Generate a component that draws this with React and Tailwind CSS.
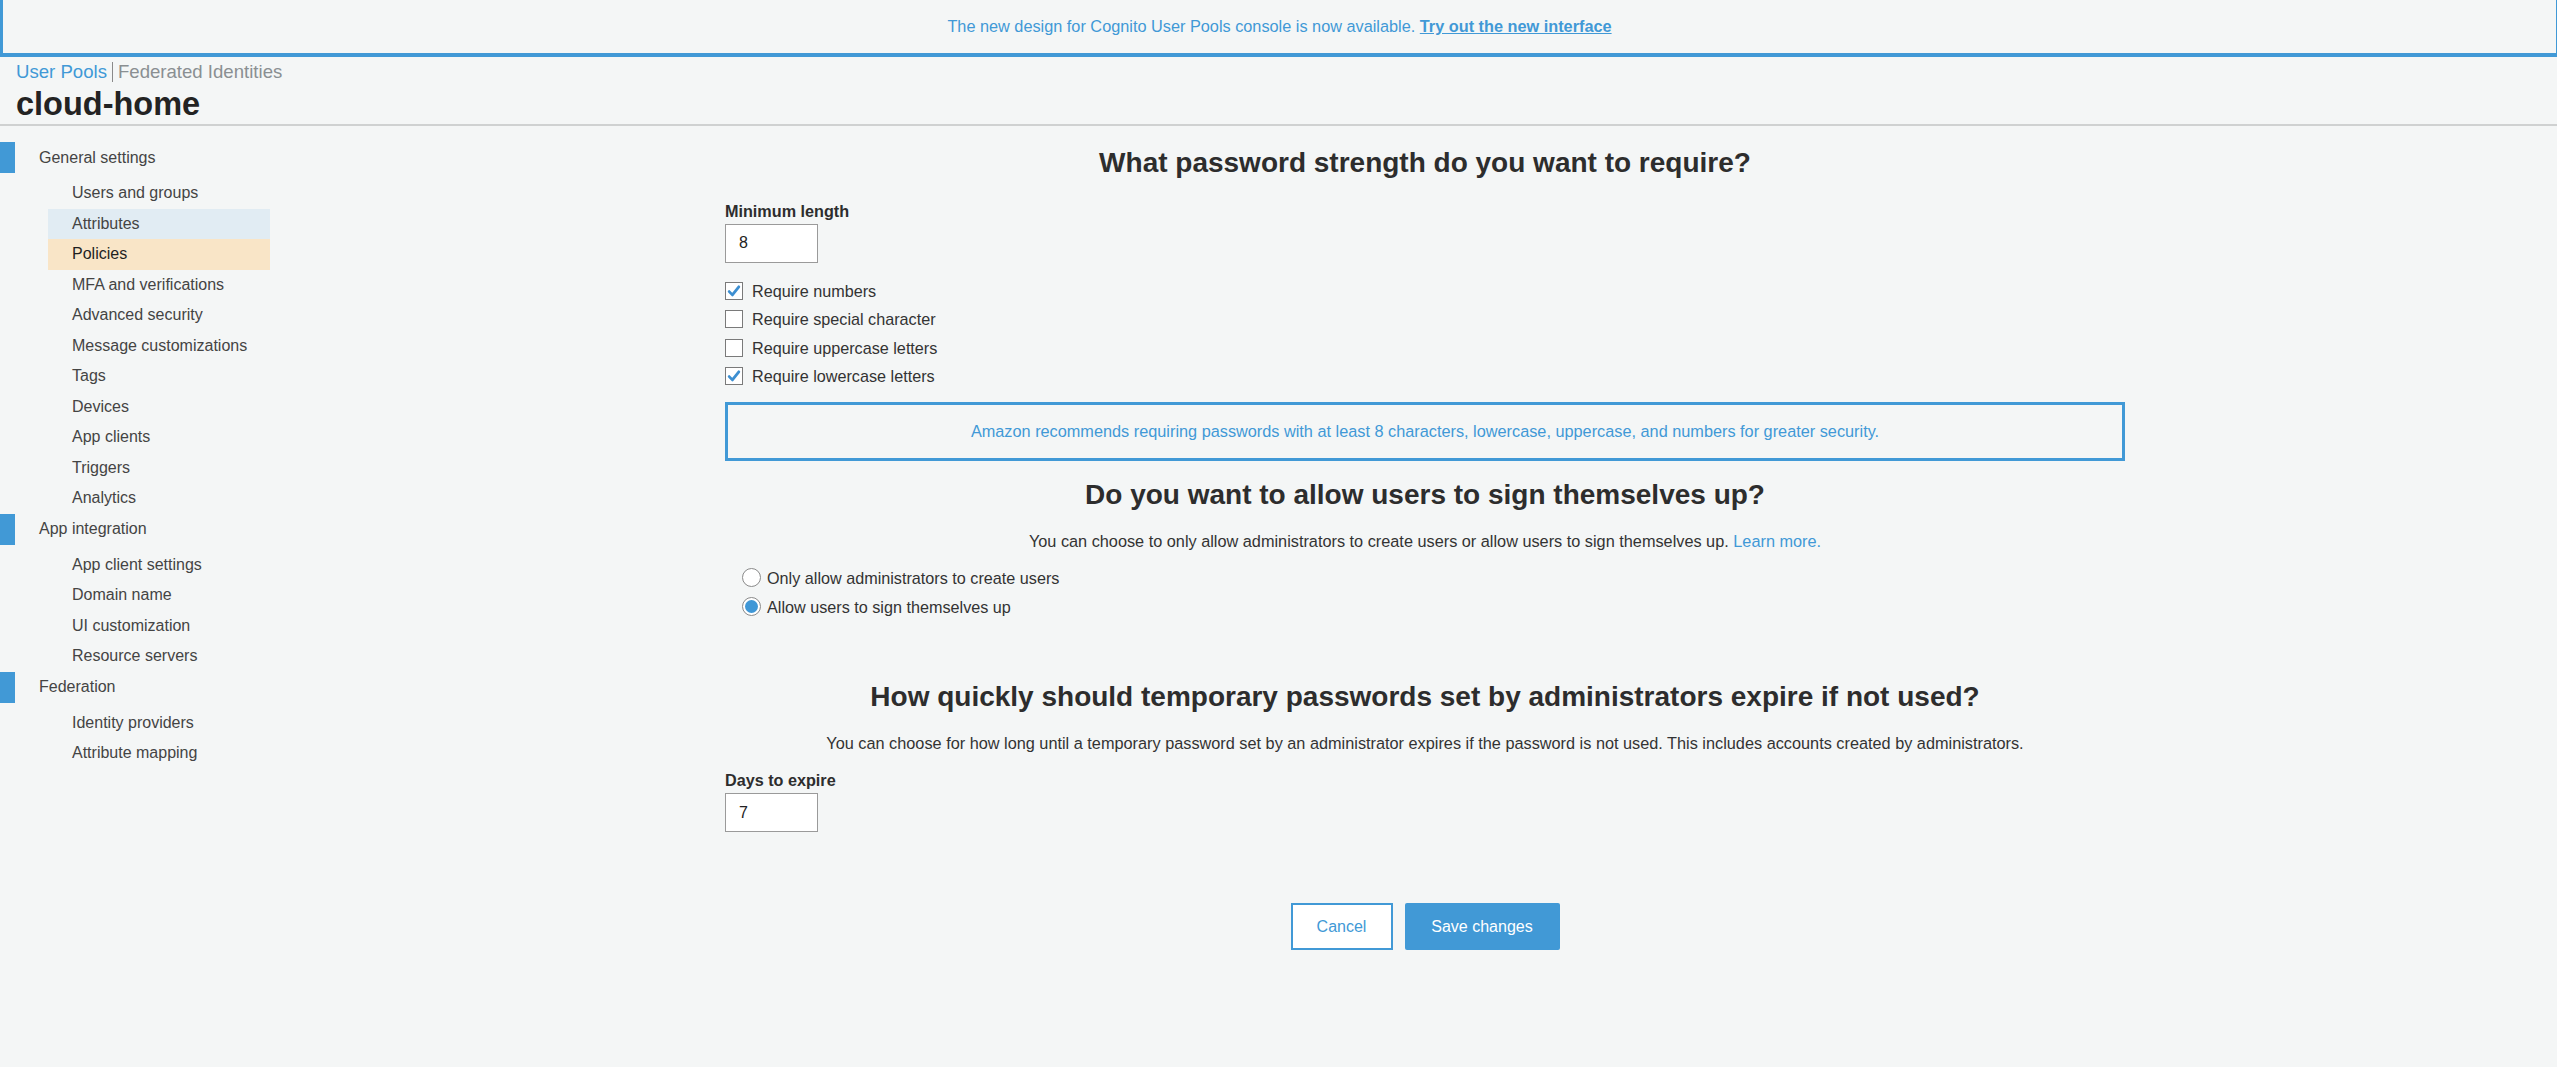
import React from "react";

function Check() {
  return (
    <svg width="14" height="14" viewBox="0 0 14 14" className="block">
      <path d="M2.2 7.6 L5.4 10.9 L11.8 2.8" fill="none" stroke="#3d8fd1" strokeWidth="2.8" strokeLinecap="round" strokeLinejoin="round" />
    </svg>
  );
}

function CheckRow({ label, checked }) {
  return (
    <div className="flex h-[28.5px] items-center">
      <span className="flex h-[18px] w-[18px] items-center justify-center border border-[#7a7a7a] bg-white">
        {checked && <Check />}
      </span>
      <span className="ml-[9px] text-[16.2px] leading-[20px] text-[#333]">{label}</span>
    </div>
  );
}

function RadioRow({ label, checked }) {
  return (
    <div className="flex h-[29px] items-center pl-[17px]">
      <span className="flex h-[19px] w-[19px] items-center justify-center rounded-full border border-[#8a8a8a] bg-white">
        {checked && <span className="h-[13px] w-[13px] rounded-full bg-[#3f97d6]" />}
      </span>
      <span className="ml-[6px] text-[16.2px] leading-[20px] text-[#333]">{label}</span>
    </div>
  );
}

function NavHeader({ label }) {
  return (
    <div className="flex h-[31px] items-center">
      <span className="h-[31px] w-[15px] bg-[#4199d6]" />
      <span className="ml-[24px] text-[16px] text-[#444]">{label}</span>
    </div>
  );
}

function NavItem({ label, state }) {
  const bg = state === "hover" ? "bg-[#e1ecf3]" : state === "active" ? "bg-[#f9e5c7]" : "";
  const color = state === "active" ? "text-[#1f1f1f]" : "text-[#444]";
  return (
    <div className={`ml-[48px] flex h-[30.5px] w-[222px] items-center pl-[24px] text-[16px] ${bg} ${color}`}>
      {label}
    </div>
  );
}

export default function App() {
  return (
    <div className="min-h-screen bg-[#f4f6f6] font-['Liberation_Sans',Arial,sans-serif] text-[#333]">
      {/* banner */}
      <div className="flex h-[57px] items-center justify-center border-b-4 border-l-[3px] border-r border-[#4199d6] text-[16.3px] text-[#4199d6]">
        <span>
          The new design for Cognito User Pools console is now available.{" "}
          <a className="font-bold underline">Try out the new interface</a>
        </span>
      </div>

      {/* header */}
      <div className="border-b-2 border-[#cfd1d1] px-4 pb-[2px]">
        <div className="flex items-center pt-[5px] text-[18.6px] leading-[20px]">
          <span className="text-[#4199d6]">User Pools</span>
          <span className="mx-[5px] h-[20px] w-px bg-[#8a8a8a]" />
          <span className="text-[#8a8f92]">Federated Identities</span>
        </div>
        <div className="mt-[4px] text-[32.5px] font-bold leading-[36px] text-[#232323]">cloud-home</div>
      </div>

      <div className="flex">
        {/* sidebar */}
        <div className="w-[293px] shrink-0 pt-[16px]">
          <NavHeader label="General settings" />
          <div className="mt-[5px]">
            <NavItem label="Users and groups" />
            <NavItem label="Attributes" state="hover" />
            <NavItem label="Policies" state="active" />
            <NavItem label="MFA and verifications" />
            <NavItem label="Advanced security" />
            <NavItem label="Message customizations" />
            <NavItem label="Tags" />
            <NavItem label="Devices" />
            <NavItem label="App clients" />
            <NavItem label="Triggers" />
            <NavItem label="Analytics" />
          </div>
          <NavHeader label="App integration" />
          <div className="mt-[5px]">
            <NavItem label="App client settings" />
            <NavItem label="Domain name" />
            <NavItem label="UI customization" />
            <NavItem label="Resource servers" />
          </div>
          <NavHeader label="Federation" />
          <div className="mt-[5px]">
            <NavItem label="Identity providers" />
            <NavItem label="Attribute mapping" />
          </div>
        </div>

        {/* main */}
        <div className="flex-1 pt-[21px]">
          <div className="mx-auto w-[1400px]">
            <h2 className="text-center text-[28px] font-bold leading-[32px] text-[#2d2d2d]">
              What password strength do you want to require?
            </h2>
            <div className="mt-[22px] text-[16.2px] font-bold leading-[20px] text-[#2d2d2d]">Minimum length</div>
            <div className="mt-[2.5px] flex h-[39px] w-[93px] items-center border border-[#9a9a9a] bg-white pl-[13px] text-[16px] text-[#222]">
              8
            </div>
            <div className="mt-[14px]">
              <CheckRow label="Require numbers" checked />
              <CheckRow label="Require special character" />
              <CheckRow label="Require uppercase letters" />
              <CheckRow label="Require lowercase letters" checked />
            </div>
            <div className="mt-[11px] flex h-[59px] items-center justify-center border-[3px] border-[#4199d6] text-[16.3px] text-[#4199d6]">
              Amazon recommends requiring passwords with at least 8 characters, lowercase, uppercase, and numbers for greater security.
            </div>

            <h2 className="mt-[18px] text-center text-[28px] font-bold leading-[32px] text-[#2d2d2d]">
              Do you want to allow users to sign themselves up?
            </h2>
            <p className="mt-[20px] text-center text-[16.3px] leading-[20px] text-[#333]">
              You can choose to only allow administrators to create users or allow users to sign themselves up.{" "}
              <a className="text-[#4199d6]">Learn more.</a>
            </p>
            <div className="mt-[12.5px]">
              <RadioRow label="Only allow administrators to create users" />
              <RadioRow label="Allow users to sign themselves up" checked />
            </div>

            <h2 className="mt-[60px] text-center text-[28px] font-bold leading-[32px] text-[#2d2d2d]">
              How quickly should temporary passwords set by administrators expire if not used?
            </h2>
            <p className="mt-[20px] text-center text-[16.3px] leading-[20px] text-[#333]">
              You can choose for how long until a temporary password set by an administrator expires if the password is not used. This includes accounts created by administrators.
            </p>
            <div className="mt-[17px] text-[16.2px] font-bold leading-[20px] text-[#2d2d2d]">Days to expire</div>
            <div className="mt-[3px] flex h-[39px] w-[93px] items-center border border-[#9a9a9a] bg-white pl-[13px] text-[16px] text-[#222]">
              7
            </div>

            <div className="mt-[71px] flex justify-center gap-[12px] pb-10">
              <button className="h-[47px] w-[102px] border-2 border-[#4199d6] bg-white text-[16px] text-[#4199d6]">
                Cancel
              </button>
              <button className="h-[47px] w-[155px] rounded-[2px] bg-[#4199d6] text-[16px] text-white">
                Save changes
              </button>
            </div>
          </div>
        </div>
      </div>
    </div>
  );
}
